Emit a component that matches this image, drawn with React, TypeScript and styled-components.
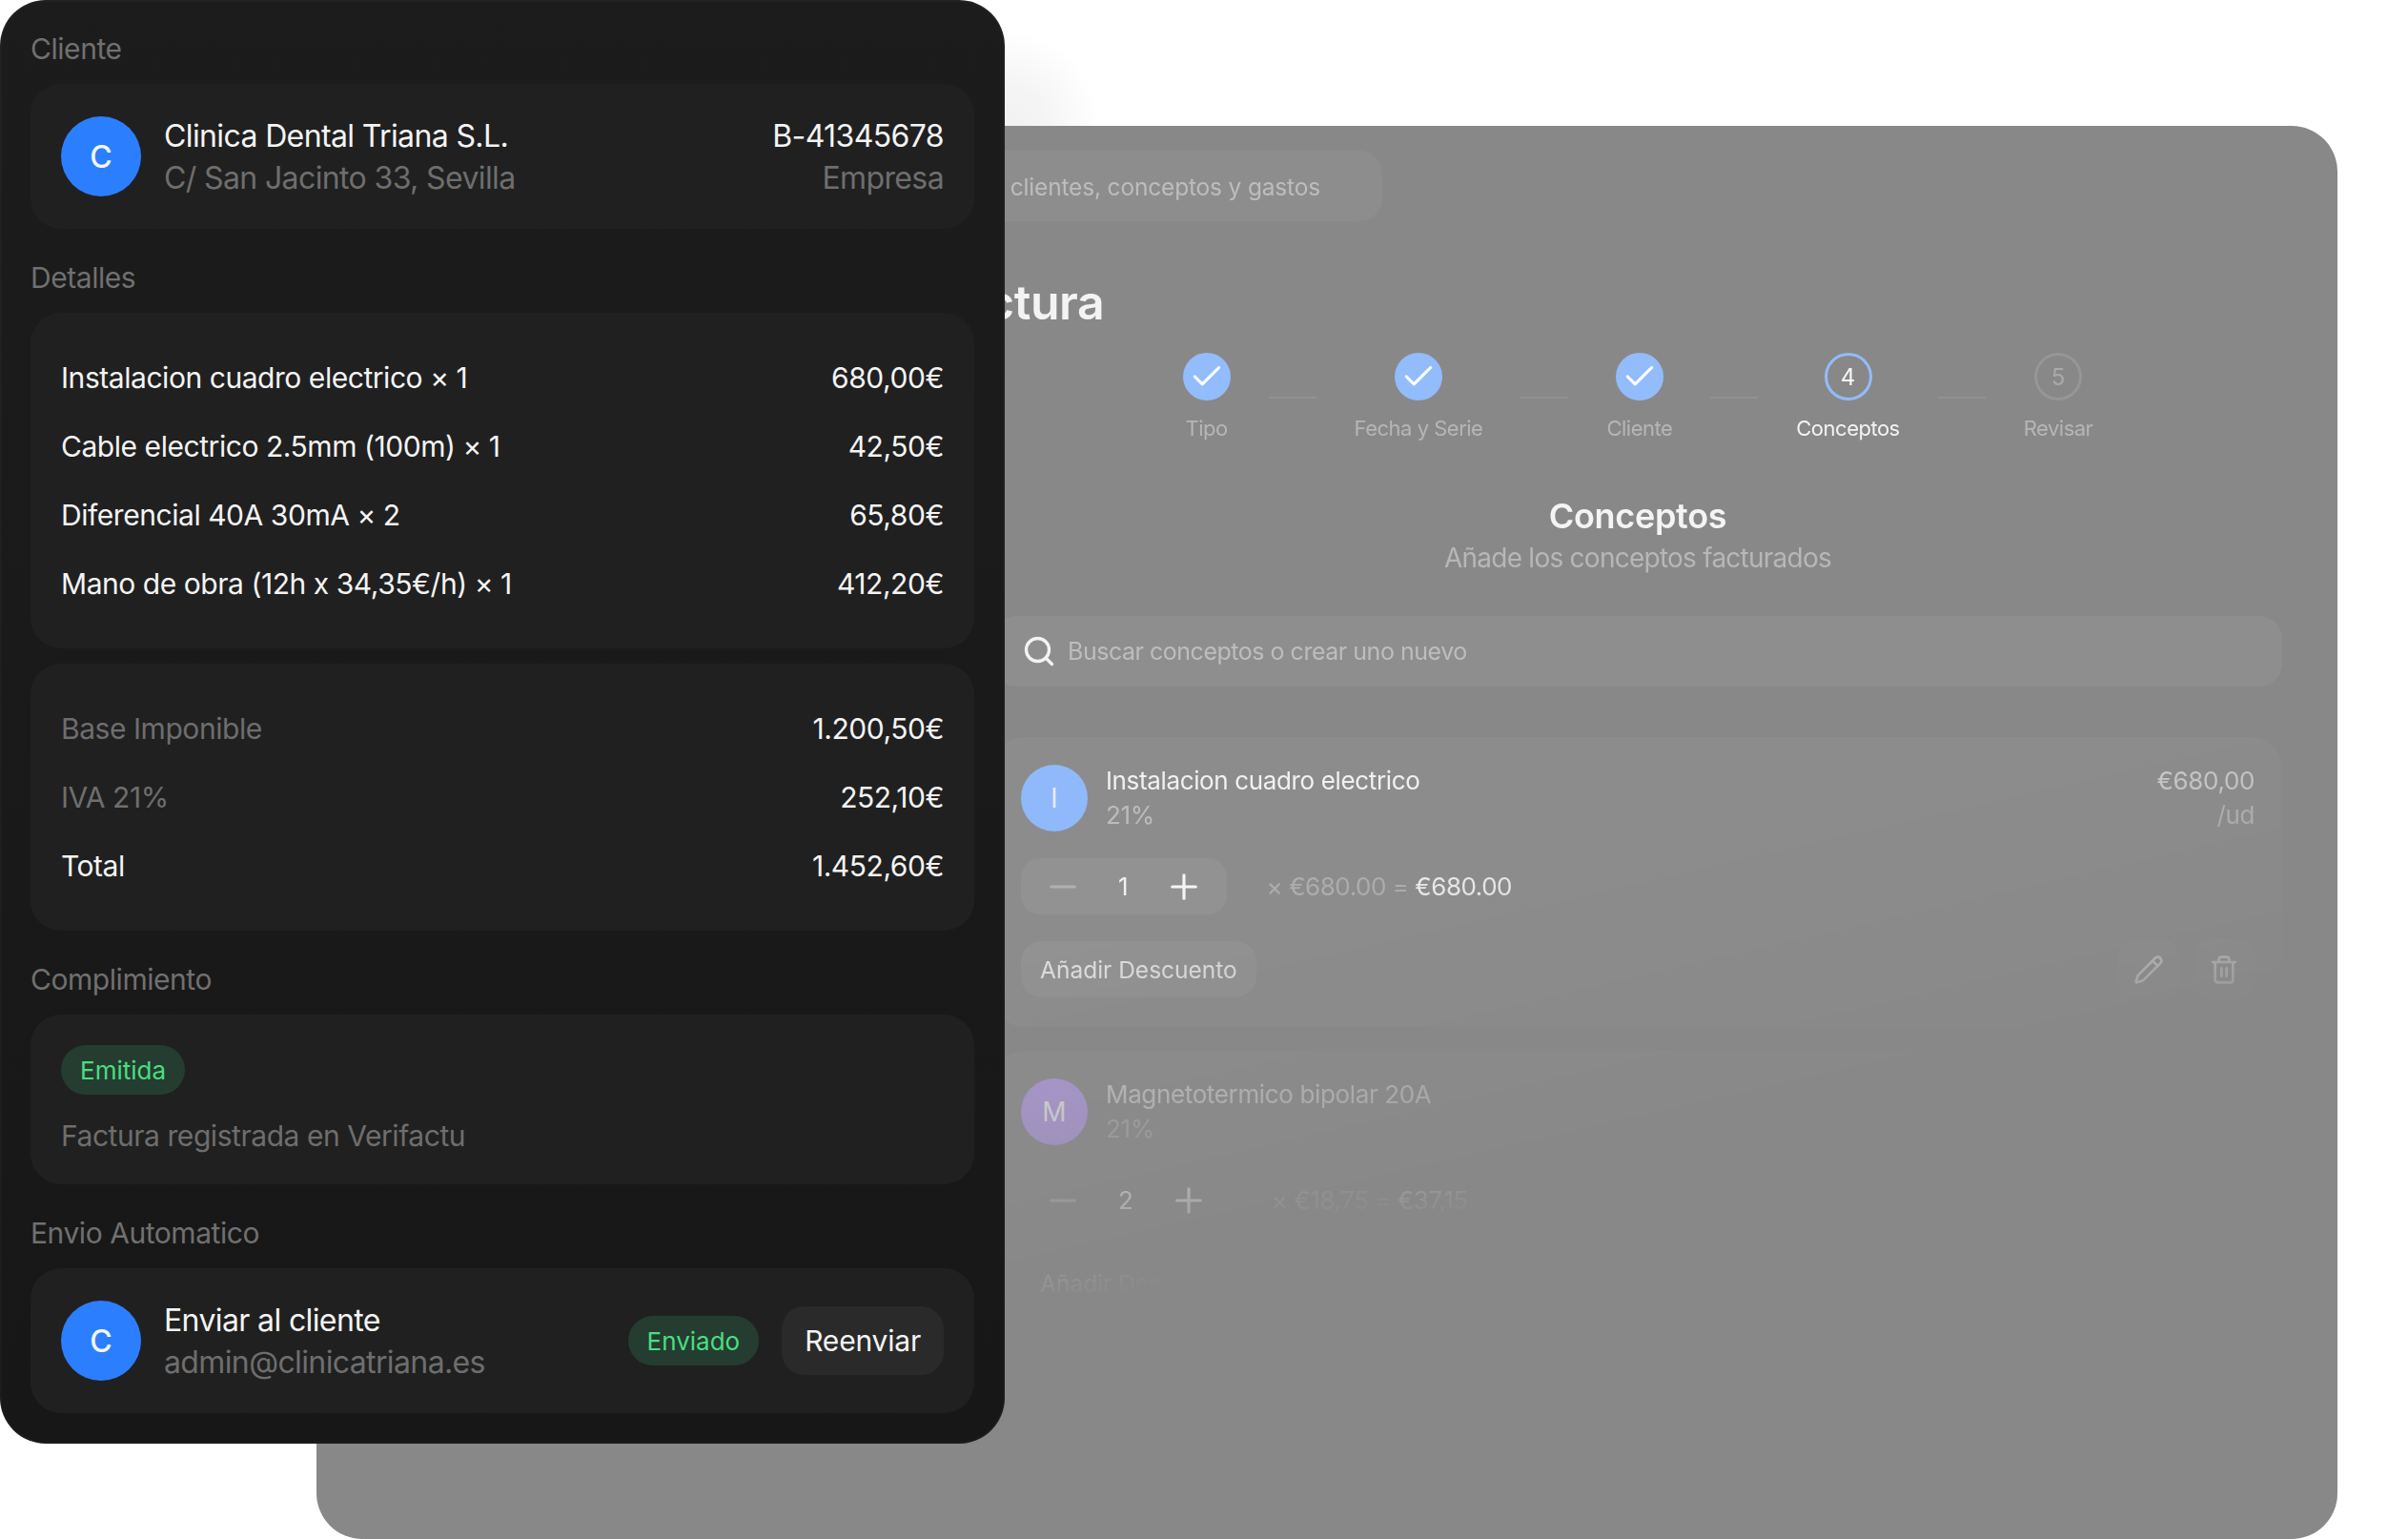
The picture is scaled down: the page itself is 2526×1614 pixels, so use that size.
import React from "react";
import styled, { createGlobalStyle } from "styled-components";
import { Check, Minus, Pencil, Plus, Search, Trash2 } from "lucide-react";

const GlobalStyle = createGlobalStyle`
  html, body {
    margin: 0;
    padding: 0;
    background: #ffffff;
    font-family: Inter, "Liberation Sans", sans-serif;
  }
  * {
    box-sizing: border-box;
  }
`;

const Stage = styled.div`
  position: relative;
  width: 2526px;
  height: 1614px;
  overflow: hidden;
  background: #ffffff;
  padding: 132px 74px 0 332px;
`;

const Glow = styled.div`
  position: absolute;
  left: 1054px;
  top: 22px;
  width: 110px;
  height: 110px;
  background: radial-gradient(circle 100px at 0 100%, #f1f1f1 0%, #f4f4f4 40%, #ffffff 100%);
`;

/* back window */
const BackWindow = styled.section`
  width: 2120px;
  height: 1482px;
  border-radius: 48px;
  background: #888888;
  overflow: hidden;
  display: flex;
  justify-content: flex-end;
`;

const Main = styled.div`
  width: 1638px;
  height: 1482px;
  padding: 26px 58px 0 0;
  display: flex;
  flex-direction: column;
  mask-image: linear-gradient(
    167deg,
    #000 50%,
    rgba(0, 0, 0, 0.5) 63%,
    rgba(0, 0, 0, 0.22) 67.5%,
    transparent 70.5%
  );
`;

const TopSearch = styled.div`
  width: 636px;
  height: 74px;
  flex: none;
  border-radius: 24px;
  background: rgba(255, 255, 255, 0.045);
  display: flex;
  align-items: center;
  justify-content: flex-end;
  padding: 2px 65px 0 0;
  font-size: 24.5px;
  letter-spacing: -0.17px;
  color: #bdbdbd;
  white-space: nowrap;
`;

const PageTitle = styled.h1`
  margin: 56px 0 0;
  font-size: 50px;
  line-height: 58px;
  font-weight: 600;
  letter-spacing: -0.45px;
  color: #f3f3f3;
  white-space: nowrap;
`;

const Wizard = styled.div`
  width: 1352px;
  align-self: flex-end;
  display: flex;
  flex-direction: column;
`;

const Stepper = styled.div`
  margin-top: 24px;
  display: flex;
  justify-content: center;
  gap: 40px;
`;

const Step = styled.div`
  display: flex;
  flex-direction: column;
  align-items: center;
  gap: 14px;
`;

const StepCircle = styled.div<{ $state: "done" | "active" | "todo" }>`
  width: 50px;
  height: 50px;
  border-radius: 50%;
  display: flex;
  align-items: center;
  justify-content: center;
  font-size: 24px;
  background: ${p => (p.$state === "done" ? "#92bcfb" : "transparent")};
  border: 3px solid
    ${p => (p.$state === "todo" ? "rgba(255,255,255,0.12)" : "#92bcfb")};
  color: ${p => (p.$state === "todo" ? "#a9a9a9" : "#f7f7f7")};
`;

const StepLabel = styled.div<{ $active?: boolean }>`
  font-size: 22px;
  line-height: 30px;
  letter-spacing: -0.5px;
  white-space: nowrap;
  color: ${p => (p.$active ? "#f3f3f3" : "#b6b6b6")};
`;

const Connector = styled.div`
  width: 50px;
  height: 2px;
  margin-top: 46px;
  background: rgba(255, 255, 255, 0.09);
`;

const Heading = styled.h2`
  margin: 55px 0 0;
  text-align: center;
  font-size: 36px;
  line-height: 44px;
  font-weight: 600;
  letter-spacing: -0.3px;
  color: #f4f4f4;
`;

const SubHeading = styled.p`
  margin: 3px 0 0;
  text-align: center;
  font-size: 28px;
  line-height: 38px;
  letter-spacing: -0.75px;
  color: #b7b7b7;
`;

const ConceptSearch = styled.div`
  margin-top: 42px;
  height: 74px;
  border-radius: 24px;
  background: rgba(255, 255, 255, 0.05);
  display: flex;
  align-items: center;
  gap: 12px;
  padding-left: 30px;
  font-size: 25px;
  letter-spacing: -0.48px;
  color: #bdbdbd;
  svg {
    color: #f3f3f3;
  }
`;

const ConceptList = styled.div`
  margin-top: 53px;
  display: flex;
  flex-direction: column;
  gap: 25px;
`;

const ConceptCard = styled.article`
  height: 304px;
  border-radius: 32px;
  background: rgba(255, 255, 255, 0.04);
  padding: 28px 29px 30px 29px;
  display: flex;
  flex-direction: column;
`;

const ConceptHead = styled.div`
  display: flex;
  align-items: center;
  gap: 19px;
`;

const ConceptAvatar = styled.div<{ $color: string }>`
  width: 70px;
  height: 70px;
  flex: none;
  border-radius: 50%;
  background: ${p => p.$color};
  color: #e9e9e9;
  font-size: 28px;
  display: flex;
  align-items: center;
  justify-content: center;
`;

const ConceptInfo = styled.div<{ $ghost?: boolean }>`
  flex: 1;
  display: flex;
  flex-direction: column;
  opacity: ${p => (p.$ghost ? 0.6 : 1)};
`;

const ConceptLine = styled.div`
  display: flex;
  justify-content: space-between;
  height: 36px;
  line-height: 36px;
  font-size: 26px;
  letter-spacing: -0.36px;
`;

const ConceptName = styled.span`
  color: #f1f1f1;
`;

const ConceptDim = styled.span`
  color: #d4d4d4;
`;

const ConceptFaint = styled.span`
  color: #bcbcbc;
`;

const QtyRow = styled.div`
  margin-top: 27px;
  display: flex;
  align-items: center;
  gap: 42px;
`;

const QtyBox = styled.div<{ $ghost?: boolean }>`
  height: 59px;
  border-radius: 20px;
  background: ${p => (p.$ghost ? "transparent" : "rgba(255, 255, 255, 0.05)")};
  display: flex;
  align-items: center;
  gap: 37px;
  padding: 0 24px 0 23px;
  font-size: 26px;
  color: #f1f1f1;
`;

const QtyMinus = styled(Minus)`
  color: #b0b0b0;
`;

const QtyPlus = styled(Plus)`
  color: #f5f5f5;
`;

const QtyTotal = styled.div`
  font-size: 26px;
  letter-spacing: -0.46px;
  color: #adadad;
  white-space: nowrap;
  strong {
    font-weight: 400;
    color: #ededed;
  }
`;

const ActionRow = styled.div`
  margin-top: 28px;
  height: 59px;
  display: flex;
  align-items: center;
  justify-content: space-between;
`;

const DiscountButton = styled.div<{ $ghost?: boolean }>`
  height: 59px;
  padding: 0 20px;
  border-radius: 22px;
  background: ${p => (p.$ghost ? "transparent" : "rgba(255, 255, 255, 0.05)")};
  display: flex;
  align-items: center;
  font-size: 24.5px;
  color: #e0e0e0;
  white-space: nowrap;
`;

const IconButtons = styled.div`
  display: flex;
  gap: 15px;
`;

const IconButton = styled.div`
  width: 64px;
  height: 64px;
  border-radius: 20px;
  background: rgba(255, 255, 255, 0.03);
  color: #e6e6e6;
  display: flex;
  align-items: center;
  justify-content: center;
`;

/* front panel */
const FrontPanel = styled.aside`
  position: absolute;
  left: 0;
  top: 0;
  width: 1054px;
  height: 1514px;
  border-radius: 48px;
  padding: 32px 32px;
  background: linear-gradient(180deg, #1c1c1c 0%, #171717 100%);
  box-shadow: inset 0 0 0 2px rgba(255, 255, 255, 0.025);
  display: flex;
  flex-direction: column;
`;

const SectionLabel = styled.div`
  font-size: 30px;
  line-height: 38px;
  letter-spacing: -0.45px;
  color: #707070;
  margin-bottom: 18px;
`;

const Card = styled.div<{ $gap?: number }>`
  background: #202020;
  border-radius: 32px;
  padding: 32px;
  margin-bottom: ${p => p.$gap ?? 32}px;
`;

const RowCard = styled(Card)`
  height: 152px;
  display: flex;
  align-items: center;
  gap: 24px;
`;

const Avatar = styled.div`
  width: 84px;
  height: 84px;
  flex: none;
  border-radius: 50%;
  background: #2b7fff;
  color: #f6f6f6;
  font-size: 32px;
  font-weight: 500;
  display: flex;
  align-items: center;
  justify-content: center;
`;

const TextStack = styled.div<{ $right?: boolean }>`
  display: flex;
  flex-direction: column;
  gap: 6px;
  padding-top: 2px;
  text-align: ${p => (p.$right ? "right" : "left")};
  margin-left: ${p => (p.$right ? "auto" : "0")};
`;

const Primary = styled.div`
  font-size: 32px;
  line-height: 38px;
  letter-spacing: -0.62px;
  color: #f4f4f4;
  white-space: nowrap;
`;

const Secondary = styled.div`
  font-size: 32px;
  line-height: 38px;
  letter-spacing: -0.62px;
  color: #6e6e6e;
  white-space: nowrap;
`;

const AmountRow = styled.div`
  height: 72px;
  display: flex;
  align-items: center;
  justify-content: space-between;
  font-size: 30px;
  letter-spacing: -0.45px;
`;

const RowLabel = styled.span<{ $muted?: boolean }>`
  color: ${p => (p.$muted ? "#6e6e6e" : "#f4f4f4")};
`;

const RowValue = styled.span`
  color: #f4f4f4;
`;

const Badge = styled.div`
  height: 52px;
  padding: 0 20px;
  border-radius: 26px;
  background: #243d30;
  color: #4ade80;
  font-size: 26px;
  display: inline-flex;
  align-items: center;
`;

const Note = styled.div`
  margin-top: 24px;
  font-size: 30px;
  line-height: 38px;
  letter-spacing: -0.45px;
  color: #6e6e6e;
`;

const ResendButton = styled.div`
  height: 72px;
  padding: 0 24px;
  border-radius: 24px;
  background: #2a2a2a;
  color: #f4f4f4;
  font-size: 30px;
  letter-spacing: -0.2px;
  display: flex;
  align-items: center;
`;

const SendActions = styled.div`
  margin-left: auto;
  display: flex;
  align-items: center;
  gap: 24px;
`;

const steps = [
  { label: "Tipo", state: "done" },
  { label: "Fecha y Serie", state: "done" },
  { label: "Cliente", state: "done" },
  { label: "Conceptos", state: "active", n: 4 },
  { label: "Revisar", state: "todo", n: 5 },
] as const;

const lines = [
  ["Instalacion cuadro electrico × 1", "680,00€"],
  ["Cable electrico 2.5mm (100m) × 1", "42,50€"],
  ["Diferencial 40A 30mA × 2", "65,80€"],
  ["Mano de obra (12h x 34,35€/h) × 1", "412,20€"],
];

type ConceptProps = {
  initial: string;
  color: string;
  name: string;
  price: string;
  qty: number;
  unit: string;
  total: string;
  ghost?: boolean;
};

const Concept: React.FC<ConceptProps> = ({ initial, color, name, price, qty, unit, total, ghost }) => (
  <ConceptCard>
    <ConceptHead>
      <ConceptAvatar $color={color}>{initial}</ConceptAvatar>
      <ConceptInfo $ghost={ghost}>
        <ConceptLine>
          <ConceptName>{name}</ConceptName>
          <ConceptDim>{price}</ConceptDim>
        </ConceptLine>
        <ConceptLine>
          <ConceptFaint>21%</ConceptFaint>
          <ConceptFaint>/ud</ConceptFaint>
        </ConceptLine>
      </ConceptInfo>
    </ConceptHead>
    <QtyRow>
      <QtyBox $ghost={ghost}>
        <QtyMinus size={42} strokeWidth={1.8} />
        <span>{qty}</span>
        <QtyPlus size={42} strokeWidth={1.8} />
      </QtyBox>
      <QtyTotal>
        × {unit} = <strong>{total}</strong>
      </QtyTotal>
    </QtyRow>
    <ActionRow>
      <DiscountButton $ghost={ghost}>Añadir Descuento</DiscountButton>
      <IconButtons>
        <IconButton>
          <Pencil size={32} strokeWidth={2} />
        </IconButton>
        <IconButton>
          <Trash2 size={32} strokeWidth={2} />
        </IconButton>
      </IconButtons>
    </ActionRow>
  </ConceptCard>
);

const App: React.FC = () => {
  return (
    <Stage>
      <GlobalStyle />
      <Glow />
      <BackWindow>
        <Main>
          <TopSearch>clientes, conceptos y gastos</TopSearch>
          <PageTitle>Nueva Factura</PageTitle>
          <Wizard>
            <Stepper>
              {steps.map((step, idx) => (
                <React.Fragment key={step.label}>
                  {idx > 0 && <Connector />}
                  <Step>
                    <StepCircle $state={step.state}>
                      {step.state === "done" ? (
                        <Check size={38} strokeWidth={2} color="#ffffff" />
                      ) : (
                        step.n
                      )}
                    </StepCircle>
                    <StepLabel $active={step.state === "active"}>{step.label}</StepLabel>
                  </Step>
                </React.Fragment>
              ))}
            </Stepper>
            <Heading>Conceptos</Heading>
            <SubHeading>Añade los conceptos facturados</SubHeading>
            <ConceptSearch>
              <Search size={36} strokeWidth={2.2} />
              Buscar conceptos o crear uno nuevo
            </ConceptSearch>
            <ConceptList>
              <Concept
                initial="I"
                color="#8fb9fb"
                name="Instalacion cuadro electrico"
                price="€680,00"
                qty={1}
                unit="€680.00"
                total="€680.00"
              />
              <Concept
                initial="M"
                color="#b09ae0"
                name="Magnetotermico bipolar 20A"
                price="€18,75"
                qty={2}
                unit="€18,75"
                total="€37,15"
                ghost
              />
            </ConceptList>
          </Wizard>
        </Main>
      </BackWindow>

      <FrontPanel>
        <SectionLabel>Cliente</SectionLabel>
        <RowCard>
          <Avatar>C</Avatar>
          <TextStack>
            <Primary>Clinica Dental Triana S.L.</Primary>
            <Secondary>C/ San Jacinto 33, Sevilla</Secondary>
          </TextStack>
          <TextStack $right>
            <Primary>B-41345678</Primary>
            <Secondary>Empresa</Secondary>
          </TextStack>
        </RowCard>

        <SectionLabel>Detalles</SectionLabel>
        <Card $gap={16}>
          {lines.map(([label, value]) => (
            <AmountRow key={label}>
              <RowLabel>{label}</RowLabel>
              <RowValue>{value}</RowValue>
            </AmountRow>
          ))}
        </Card>
        <Card>
          <AmountRow>
            <RowLabel $muted>Base Imponible</RowLabel>
            <RowValue>1.200,50€</RowValue>
          </AmountRow>
          <AmountRow>
            <RowLabel $muted>IVA 21%</RowLabel>
            <RowValue>252,10€</RowValue>
          </AmountRow>
          <AmountRow>
            <RowLabel>Total</RowLabel>
            <RowValue>1.452,60€</RowValue>
          </AmountRow>
        </Card>

        <SectionLabel>Complimiento</SectionLabel>
        <Card>
          <Badge>Emitida</Badge>
          <Note>Factura registrada en Verifactu</Note>
        </Card>

        <SectionLabel>Envio Automatico</SectionLabel>
        <RowCard $gap={0}>
          <Avatar>C</Avatar>
          <TextStack>
            <Primary>Enviar al cliente</Primary>
            <Secondary>admin@clinicatriana.es</Secondary>
          </TextStack>
          <SendActions>
            <Badge>Enviado</Badge>
            <ResendButton>Reenviar</ResendButton>
          </SendActions>
        </RowCard>
      </FrontPanel>
    </Stage>
  );
};

export default App;
